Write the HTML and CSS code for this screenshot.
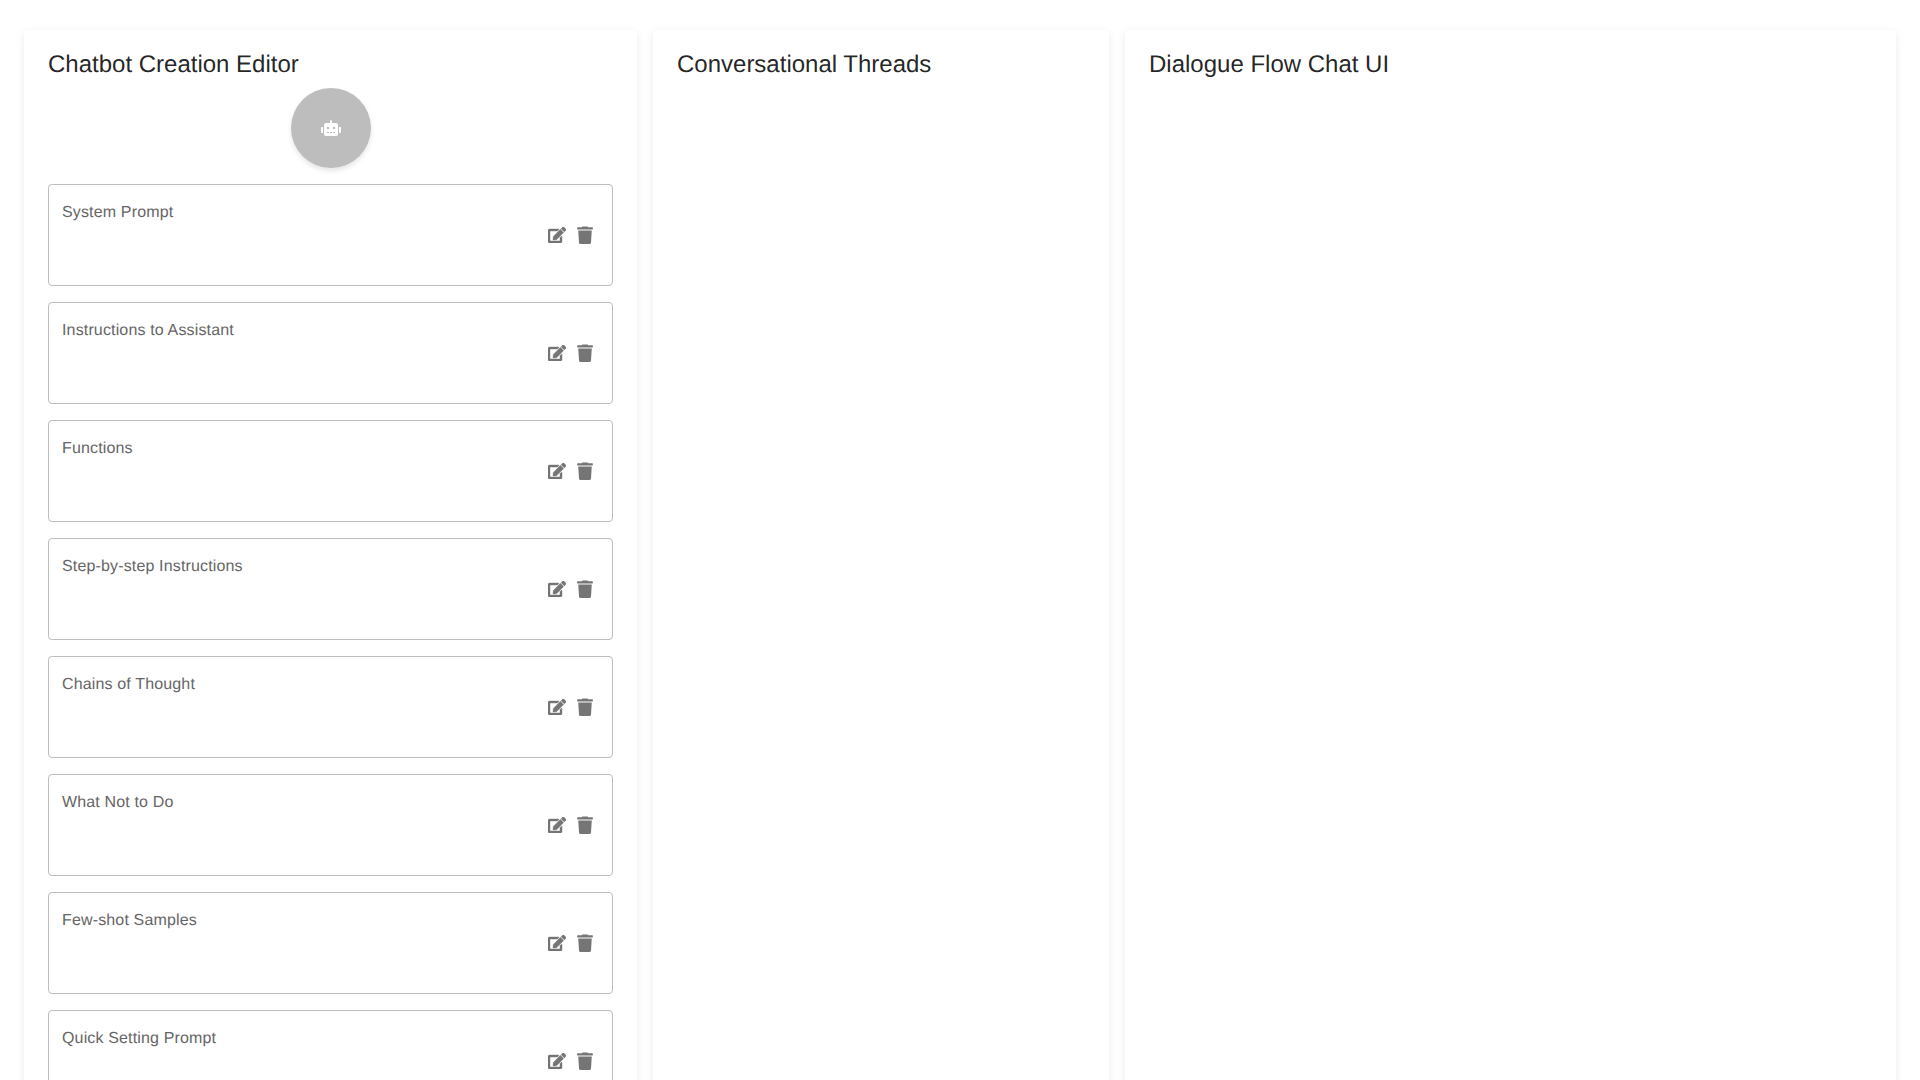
FILE: index.html
```html
<!DOCTYPE html>
<html lang="en">

<head>
  <meta charset="UTF-8">
  <meta name="viewport" content="width=device-width, initial-scale=1.0">
  <title>Chatbot Creation Editor</title>
  <link rel="stylesheet" href="styles.css">
</head>
<body>
  <svg class="icon-defs" width="0" height="0" aria-hidden="true">
    <symbol id="icon-robot" viewBox="0 0 640 512">
      <path d="M32,224H64V416H32A31.96166,31.96166,0,0,1,0,384V256A31.96166,31.96166,0,0,1,32,224Zm512-48V448a64.06328,64.06328,0,0,1-64,64H160a64.06328,64.06328,0,0,1-64-64V176a79.974,79.974,0,0,1,80-80H288V32a32,32,0,0,1,64,0V96H464A79.974,79.974,0,0,1,544,176ZM264,256a40,40,0,1,0-40,40A39.997,39.997,0,0,0,264,256Zm-8,128H192v32h64Zm96,0H288v32h64ZM456,256a40,40,0,1,0-40,40A39.997,39.997,0,0,0,456,256Zm-8,128H384v32h64ZM640,256V384a31.96166,31.96166,0,0,1-32,32H576V224h32A31.96166,31.96166,0,0,1,640,256Z"/>
    </symbol>
    <symbol id="icon-edit" viewBox="0 0 576 512">
      <path d="M402.6 83.2l90.2 90.2c3.8 3.8 3.8 10 0 13.8L274.4 405.6l-92.8 10.3c-12.4 1.4-22.9-9.1-21.5-21.5l10.3-92.8L388.8 83.2c3.8-3.8 10-3.8 13.8 0zm162-22.9l-48.8-48.8c-15.2-15.2-39.9-15.2-55.2 0l-35.4 35.4c-3.8 3.8-3.8 10 0 13.8l90.2 90.2c3.8 3.8 10 3.8 13.8 0l35.4-35.4c15.2-15.3 15.2-40 0-55.2zM384 346.2V448H64V128h229.8c3.2 0 6.2-1.3 8.5-3.5l40-40c7.6-7.6 2.2-20.5-8.5-20.5H48C21.5 64 0 85.5 0 112v352c0 26.5 21.5 48 48 48h352c26.5 0 48-21.5 48-48V306.2c0-10.7-12.9-16-20.5-8.5l-40 40c-2.2 2.3-3.5 5.3-3.5 8.5z"/>
    </symbol>
    <symbol id="icon-trash" viewBox="0 0 448 512">
      <path d="M432 32H312l-3.6-7.2A24 24 0 0 0 287 11.5H160.9a23.7 23.7 0 0 0-21.4 13.3L135.9 32H16A16 16 0 0 0 0 48v32a16 16 0 0 0 16 16h416a16 16 0 0 0 16-16V48a16 16 0 0 0-16-16zM53.2 467a48 48 0 0 0 47.9 45h245.8a48 48 0 0 0 47.9-45L416 128H32z"/>
    </symbol>
  </svg>

  <div class="layout">
    <div class="panel panel-editor">
      <h2 class="panel-title">Chatbot Creation Editor</h2>
      <div class="avatar-wrap">
        <div class="avatar">
          <svg class="icon-robot"><use href="#icon-robot"/></svg>
        </div>
      </div>

      <div class="prompt-card">
        <span class="prompt-label">System Prompt</span>
        <div class="prompt-actions">
          <svg class="icon-edit"><use href="#icon-edit"/></svg>
          <svg class="icon-trash"><use href="#icon-trash"/></svg>
        </div>
      </div>
      <div class="prompt-card">
        <span class="prompt-label">Instructions to Assistant</span>
        <div class="prompt-actions">
          <svg class="icon-edit"><use href="#icon-edit"/></svg>
          <svg class="icon-trash"><use href="#icon-trash"/></svg>
        </div>
      </div>
      <div class="prompt-card">
        <span class="prompt-label">Functions</span>
        <div class="prompt-actions">
          <svg class="icon-edit"><use href="#icon-edit"/></svg>
          <svg class="icon-trash"><use href="#icon-trash"/></svg>
        </div>
      </div>
      <div class="prompt-card">
        <span class="prompt-label">Step-by-step Instructions</span>
        <div class="prompt-actions">
          <svg class="icon-edit"><use href="#icon-edit"/></svg>
          <svg class="icon-trash"><use href="#icon-trash"/></svg>
        </div>
      </div>
      <div class="prompt-card">
        <span class="prompt-label">Chains of Thought</span>
        <div class="prompt-actions">
          <svg class="icon-edit"><use href="#icon-edit"/></svg>
          <svg class="icon-trash"><use href="#icon-trash"/></svg>
        </div>
      </div>
      <div class="prompt-card">
        <span class="prompt-label">What Not to Do</span>
        <div class="prompt-actions">
          <svg class="icon-edit"><use href="#icon-edit"/></svg>
          <svg class="icon-trash"><use href="#icon-trash"/></svg>
        </div>
      </div>
      <div class="prompt-card">
        <span class="prompt-label">Few-shot Samples</span>
        <div class="prompt-actions">
          <svg class="icon-edit"><use href="#icon-edit"/></svg>
          <svg class="icon-trash"><use href="#icon-trash"/></svg>
        </div>
      </div>
      <div class="prompt-card">
        <span class="prompt-label">Quick Setting Prompt</span>
        <div class="prompt-actions">
          <svg class="icon-edit"><use href="#icon-edit"/></svg>
          <svg class="icon-trash"><use href="#icon-trash"/></svg>
        </div>
      </div>
    </div>

    <div class="panel panel-threads">
      <h2 class="panel-title">Conversational Threads</h2>
    </div>

    <div class="panel panel-chat">
      <h2 class="panel-title">Dialogue Flow Chat UI</h2>
    </div>
  </div>
</body>
</html>
```

FILE: styles.css
```css
html {
  background-color: #fff;
}

body {
  font-family: "Liberation Sans", Arial, sans-serif;
  margin: 0;
  height: 100vh;
  overflow: hidden;
}

.icon-defs {
  position: absolute;
}

.layout {
  display: flex;
  align-items: flex-start;
  gap: 16px;
  padding: 30px 24px 0;
}

.panel {
  box-sizing: border-box;
  min-height: 1100px;
  padding: 19px 24px 24px;
  background: #fff;
  border-radius: 4px;
  box-shadow: 0 2px 8px rgba(0, 0, 0, 0.08);
}

.panel-editor {
  width: 613px;
  flex: none;
}

.panel-threads {
  width: 456px;
  flex: none;
}

.panel-chat {
  flex: 1;
}

.panel-title {
  margin: 0 0 7px;
  font-size: 24px;
  font-weight: 400;
  line-height: 1.334;
  color: rgba(0, 0, 0, 0.87);
  text-rendering: geometricPrecision;
}

.avatar-wrap {
  display: flex;
  justify-content: center;
  margin-bottom: 16px;
}

.avatar {
  width: 80px;
  height: 80px;
  border-radius: 50%;
  background: #bdbdbd;
  color: #fff;
  display: flex;
  align-items: center;
  justify-content: center;
  box-shadow: 0 3px 5px rgba(0, 0, 0, 0.1);
}

.icon-robot {
  width: 20px;
  height: 16px;
  fill: currentColor;
}

.prompt-card {
  box-sizing: border-box;
  height: 102px;
  margin-bottom: 16px;
  padding: 17px 19px 15px 13px;
  display: flex;
  justify-content: space-between;
  border: 1px solid #bdbdbd;
  border-radius: 4px;
}

.prompt-label {
  font-size: 16px;
  line-height: 22px;
  letter-spacing: 0.15px;
  color: #666;
  text-rendering: geometricPrecision;
}

.prompt-actions {
  display: flex;
  align-items: center;
  gap: 11px;
  color: #757575;
  margin-top: -2px;
}

.icon-edit {
  width: 18px;
  height: 16px;
  fill: currentColor;
  stroke: currentColor;
  stroke-width: 14;
}

.icon-trash {
  width: 16px;
  height: 18px;
  fill: currentColor;
}
```
